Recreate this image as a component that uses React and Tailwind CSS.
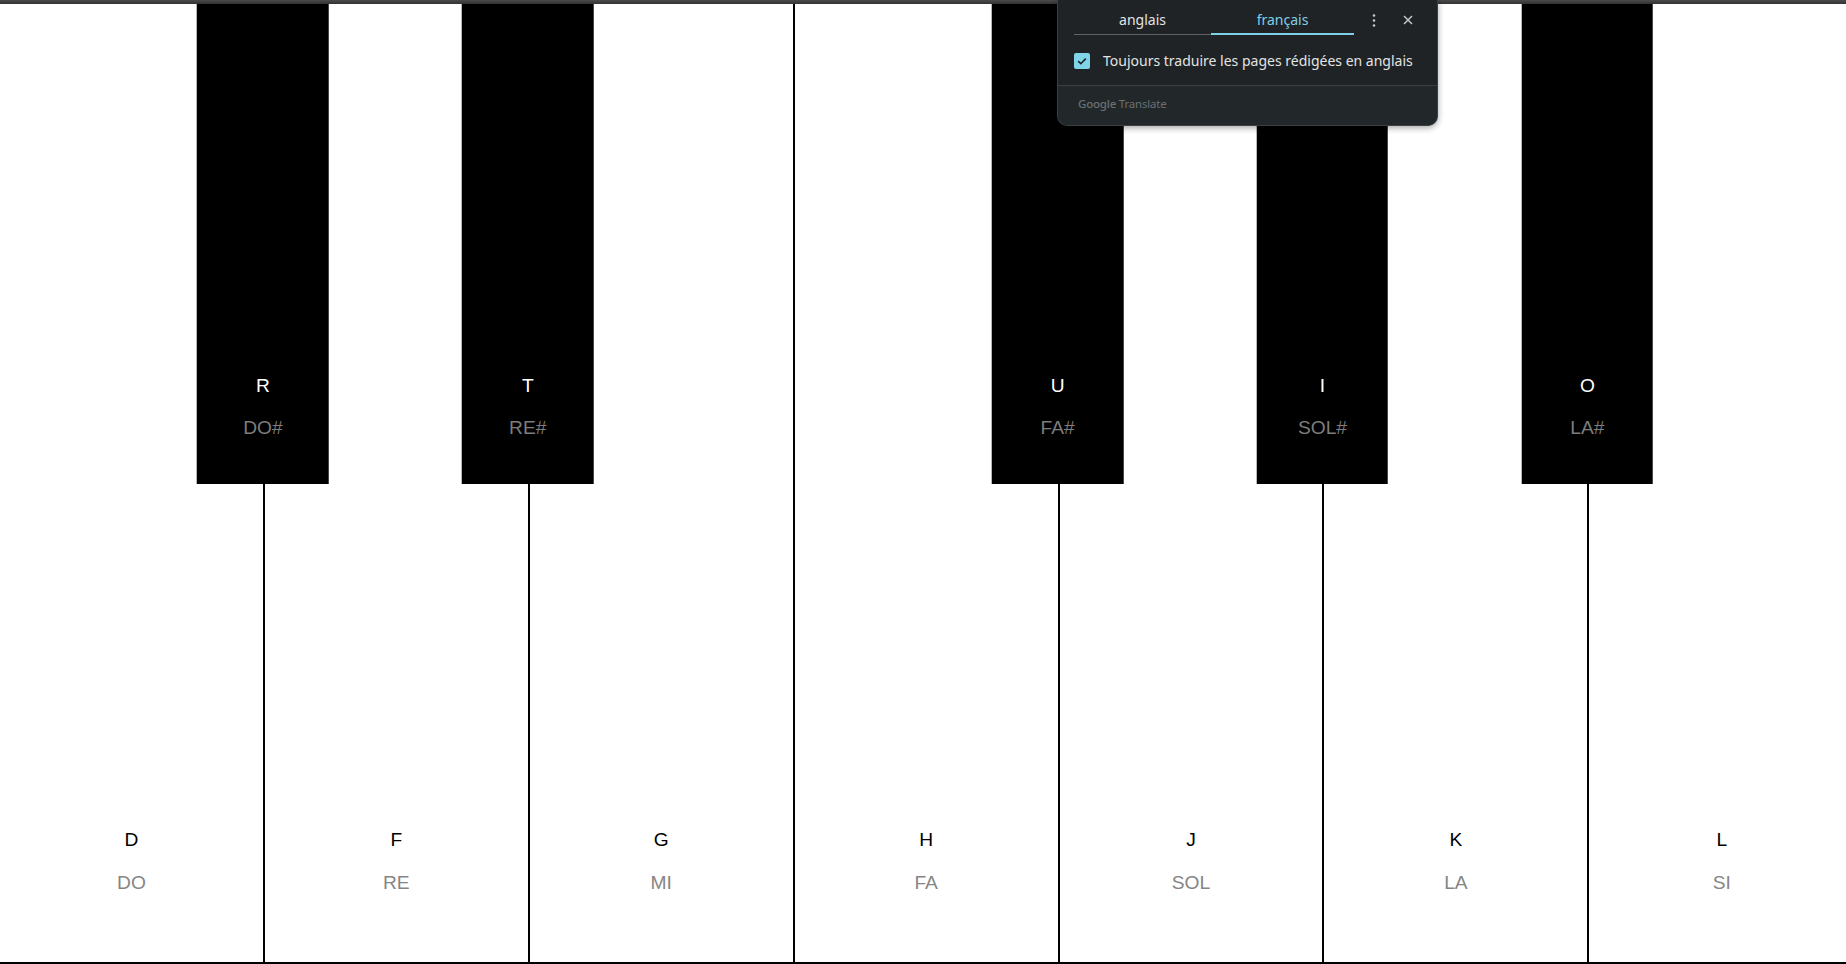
import React from "react";

const keys = [
  { k: "D", n: "DO", sharp: { k: "R", n: "DO#" } },
  { k: "F", n: "RE", sharp: { k: "T", n: "RE#" } },
  { k: "G", n: "MI" },
  { k: "H", n: "FA", sharp: { k: "U", n: "FA#" } },
  { k: "J", n: "SOL", sharp: { k: "I", n: "SOL#" } },
  { k: "K", n: "LA", sharp: { k: "O", n: "LA#" } },
  { k: "L", n: "SI" },
];

const TranslatePopup = () => (
  <div className="absolute left-[1057px] top-0 w-[381px] h-[126px] bg-[#1f2326] border border-t-0 border-[#3b4043] rounded-b-[10px] shadow-[0_2px_6px_rgba(0,0,0,0.35)] overflow-hidden z-20 font-['Noto_Sans',sans-serif]">
    {/* tabs */}
    <div className="flex h-[36px] pl-4">
      <div className="flex border-b border-[#5f6368] h-[35px]">
        <div className="w-[137px] flex items-end justify-center pb-[5px] text-[14px] leading-[18px] text-[#e3e3e3]">
          anglais
        </div>
        <div className="w-[143px] flex items-end justify-center pb-[4px] text-[14px] leading-[18px] text-[#7fcfe6] border-b-2 border-[#7fcfe6] -mb-px">
          français
        </div>
      </div>
      <svg className="ml-[14px] mt-[13px]" width="12" height="16" viewBox="0 0 12 16">
        <circle cx="6" cy="2.5" r="1.3" fill="#c4c7c5" />
        <circle cx="6" cy="7.5" r="1.3" fill="#c4c7c5" />
        <circle cx="6" cy="12.5" r="1.3" fill="#c4c7c5" />
      </svg>
      <svg className="ml-[22px] mt-[14px]" width="12" height="12" viewBox="0 0 12 12">
        <path d="M2 2 L10 10 M10 2 L2 10" stroke="#c4c7c5" strokeWidth="1.5" />
      </svg>
    </div>
    {/* checkbox row */}
    <div className="flex items-center h-[49px] pl-4">
      <div className="w-4 h-4 rounded-[2px] bg-[#7fd4e8] flex items-center justify-center">
        <svg width="12" height="12" viewBox="0 0 12 12">
          <path d="M2.2 6.2 L4.8 8.7 L9.8 3.6" stroke="#1f2326" strokeWidth="1.6" fill="none" />
        </svg>
      </div>
      <span className="ml-[13px] text-[14px] text-[#e3e3e3] leading-[18px]">
        Toujours traduire les pages rédigées en anglais
      </span>
    </div>
    {/* footer */}
    <div className="border-t border-[#3b4043] bg-[#222829] h-full pl-5 pt-[4px]">
      <span className="text-[11.5px] leading-[18px] text-[#6b6f71] tracking-[-0.2px]">
        <span className="font-medium">Google</span> Translate
      </span>
    </div>
  </div>
);

export default function App() {
  return (
    <div className="relative w-full h-[964px] overflow-hidden bg-white font-['Liberation_Sans',Arial,sans-serif]">
      <div className="h-[4px] bg-[linear-gradient(#4a4a4a,#333333)]" />
      <div className="flex h-[960px] border-b-2 border-black">
        {keys.map((key, i) => (
          <div
            key={key.k}
            className={
              "relative shrink-0 w-[264.9px] flex flex-col items-center justify-end pb-[67px] " +
              (i < keys.length - 1 ? "border-r-2 border-black" : "")
            }
          >
            <div className="text-[19.2px] leading-6 text-black">{key.k}</div>
            <div className="mt-[19px] text-[19.2px] leading-6 text-[#858585]">{key.n}</div>
            {key.sharp && (
              <div className="absolute top-0 right-0 translate-x-1/2 w-1/2 h-[480px] bg-black z-10 flex flex-col items-center justify-end pb-[44px]">
                <div className="text-[19.2px] leading-6 text-white">{key.sharp.k}</div>
                <div className="mt-[18px] text-[19.2px] leading-6 text-[#7d7d7d]">{key.sharp.n}</div>
              </div>
            )}
          </div>
        ))}
      </div>
      <TranslatePopup />
    </div>
  );
}
